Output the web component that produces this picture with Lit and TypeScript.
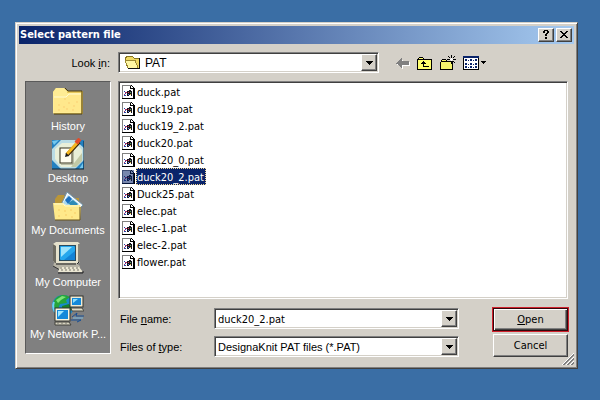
import { LitElement, html, svg, css } from "lit";
import { customElement, property, state } from "lit/decorators.js";
import { classMap } from "lit/directives/class-map.js";

const folderLarge = svg`
  <path d="M1 6 L4 2 H12 L15 5 H31 V28 H2 L1 27Z" fill="#e8c95c"/>
  <path d="M1 6 L4 2 H12 L15 5 V7 H29 V27 H1Z" fill="#ffec94"/>
  <path d="M2 11 L15 10 L17 8 H29 V26 H2Z" fill="#ffe88c"/>
  <path d="M2 11 H14 L17 8 H29" fill="none" stroke="#fffbd0"/>
  <path d="M13 2 L16 5 H30 V28 H2" fill="none" stroke="#4a3c10"/>
  <path d="M6 19h2m3 2h2m3-4h2m3 3h2m-17 4h2m6-1h2m4 1h2m2-8h2m-14-3h2" stroke="#fbcf74"/>`;

const desktopArt = svg`
  <rect x="0" y="2" width="32" height="29" fill="#16659e"/>
  <path d="M6 2H27L32 8V24L25 31H8L0 23V9Z" fill="#b9dbe4"/>
  <path d="M10 5H24L30 12V22L22 29H9L3 21V11Z" fill="#e9efd8"/>
  <path d="M19 29L30 15V23L24 29Z" fill="#c2c9a6"/>
  <path d="M0 2H9L0 11ZM23 2H32V10ZM0 22L9 31H0ZM32 22V31H23Z" fill="#2380c0"/>
  <path d="M0 3L7 2L2 7ZM27 31L31 25V30Z" fill="#72c7ee"/>
  <rect x="8" y="10" width="12" height="15" fill="#fffef0" stroke="#34301c"/>
  <path d="M9 26H21V11" fill="none" stroke="#8b8a72"/>
  <path d="M15 17L27 4" stroke="#3a2508" stroke-width="4"/>
  <path d="M15 16L26 4" stroke="#f6b81e" stroke-width="3"/>
  <path d="M24 5L28 1" stroke="#e34b28" stroke-width="4"/>
  <path d="M13 19L14 15L17 18Z" fill="#1c1c1c"/>
  <path d="M0 31H32V3" fill="none" stroke="#0b2538"/>`;

const documentsArt = svg`
  <path d="M3 9L6 5H12L14 8H27V29H3Z" fill="#bb9637"/>
  <path d="M9 15L15 2L31 15L23 23Z" fill="#f7fbff" stroke="#7395a8"/>
  <path d="M11 13L16 5L27 14L22 20Z" fill="#a9d8ee"/>
  <path d="M13 10L17 6L20 9L16 14Z" fill="#1c6fc0"/>
  <path d="M16 13L21 10L26 14L22 18Z" fill="#308bb5"/>
  <path d="M1 13H11L13 15H28L29 18L28 30H3Z" fill="#ffe98a"/>
  <path d="M2 14H11L13 16H27" fill="none" stroke="#fffac9"/>
  <path d="M3 30H28V17" fill="none" stroke="#65501a"/>
  <path d="M6 20h2m4 1h2m4-1h2m2 3h2m-18 3h2m5-1h2m4 2h2" stroke="#f7cb65"/>`;

const computerArt = svg`
  <path d="M1 2L4 0H26L28 2V20L24 23H5L1 19Z" fill="#e6e2cc"/>
  <path d="M1 2L4 4V22L1 19Z" fill="#6d6b61"/>
  <path d="M27 2V20L24 23H5" fill="none" stroke="#29292b"/>
  <rect x="7" y="3" width="17" height="16" fill="#2b4a5c"/>
  <rect x="8" y="4" width="15" height="14" rx="1" fill="#25a7ed"/>
  <path d="M9 5H20L9 15Z" fill="#9be3fc"/>
  <path d="M12 18L23 9V18Z" fill="#1283d5"/>
  <path d="M2 21H24L28 24V28H8L1 24Z" fill="#b7b4a6"/>
  <path d="M4 22H24" stroke="#1d1d1d"/>
  <path d="M1 24L8 28" stroke="#333"/>
  <path d="M8 25H27L31 30H6Z" fill="#eae6d2"/>
  <path d="M8 26h2m2 0h2m2 0h2m2 0h2m2 0h2M9 28h2m2 0h2m2 0h2m2 0h2m2 0h2" stroke="#77756b"/>
  <path d="M6 31H31V29" fill="none" stroke="#202020"/>`;

const networkArt = svg`
  <circle cx="11" cy="12" r="11" fill="#168acb"/>
  <path d="M2 7C5 1 12-1 18 3L14 6L15 9L8 10L6 15L1 14Z" fill="#25a43b"/>
  <path d="M4 6L10 2L14 3L9 6L6 9Z" fill="#7be477"/>
  <path d="M10 12L17 10L20 14L16 20H11Z" fill="#16802b"/>
  <path d="M2 8Q0 13 3 18" fill="none" stroke="#72d1f2" stroke-width="2"/>
  <rect x="18" y="2" width="13" height="11" fill="#efebd4" stroke="#33332d"/>
  <rect x="20" y="4" width="9" height="7" fill="#1489da"/>
  <path d="M21 5H26L21 9Z" fill="#8ddffc"/>
  <path d="M19 14H30L32 17H20Z" fill="#dedbc5" stroke="#4b4b44"/>
  <rect x="3" y="14" width="15" height="13" fill="#f7f4e0" stroke="#33332d"/>
  <rect x="5" y="16" width="11" height="9" fill="#1489da"/>
  <path d="M6 17H12L6 23Z" fill="#9ce6ff"/>
  <path d="M3 28H17L19 31H3Z" fill="#d8d4c2" stroke="#42423c"/>
  <path d="M5 29h2m2 0h2m2 0h2" stroke="#77756b"/>
  <path d="M20 23L25 19L24 22H32M19 26H29L25 28" fill="none" stroke="#174e94"/>
  <path d="M21 24H31" stroke="#78bde8"/>`;

const fileArt = svg`
  <path d="M2 1H11V2H12V3H13V4H14V15H2Z" fill="#fff"/>
  <path d="M2 1H11V2H3V15H2Z" fill="#808080"/>
  <path d="M11 1h1v1h1v1h1v1h1v11H2v-1h11V5h-3V2h1v2h2V3h-1V2h-1z" fill="#000"/>
  <path d="M7 7h2V6h2v1h1v5h-1v-1H9v1H7z" fill="#17121f"/>
  <path d="M4 7h1v1H4zm1 2h1v1H5zM4 11h2v1H4z" fill="#2446a8"/>
  <path d="M5 8h2v1H5zM4 10h1v1H4z" fill="#b22a60"/>
  <path d="M8 8h1v1H8z" fill="#d54848"/><path d="M10 8h1v1h-1z" fill="#55a95c"/>
  <path d="M8 10h1v1H8z" fill="#5582e5"/><path d="M10 10h1v1h-1z" fill="#e0c24b"/>`;

const folderSmall = svg`
  <path d="M1 4L4 2H8L10 4H15V14H4L1 7Z" fill="#efd963" stroke="#867420"/>
  <path d="M1 6H11L14 14H4Z" fill="#fff7a4" stroke="#9c8a32"/>
  <path d="M15 4H16V15H4V14H15Z" fill="#111"/>`;

const backArt = svg`
  <path d="M3 9H4V8H5V7H6V6H7V5H9V7H16V11H9V14H8V13H7V12H6V11H5V10H3Z" fill="#fff"/>
  <path d="M2 8H3V7H4V6H5V5H6V4H7V3H8V6H15V10H8V13H7V12H6V11H5V10H4V9H2Z" fill="#808080"/>`;

const upArt = svg`
  <path d="M0 4H1V3H2V2H6V3H7V4H15V15H0Z" fill="#000"/>
  <path d="M1 5H14V14H1Z" fill="#ffff6e"/><path d="M2 3H6V4H2Z" fill="#ffff6e"/>
  <path d="M4 8H5V7H6V6H7V7H8V8H9V9H7V11H12V12H6V9H4Z" fill="#000"/>`;

const newArt = svg`
  <path d="M0 7H1V5H2V4H6V5H7V6H13V15H0Z" fill="#000"/>
  <path d="M1 7H12V14H1Z" fill="#f2f26c"/><path d="M2 5H6V6H2Z" fill="#f2f26c"/>
  <path d="M11 0h1v3h-1zM11 6h1v3h-1zM7 4h3v1H7zM13 4h3v1h-3zM8 1h1v1H8zM9 2h1v1H9zM14 1h1v1h-1zM13 2h1v1h-1zM13 6h1v1h-1zM14 7h1v1h-1zM9 6h1v1H9z" fill="#000"/>
  <path d="M10 4h3v1h-3zM11 3h1v3h-1z" fill="#fff"/>`;

const viewArt = svg`
  <rect x="0" y="1" width="16" height="14" fill="#000"/>
  <rect x="0" y="1" width="16" height="2" fill="#0a246a"/>
  <rect x="1" y="3" width="14" height="11" fill="#fff"/>
  <path d="M2 4h2v2H2zM5 5h1v1H5zM7 4h2v2H7zM10 5h1v1h-1zM12 4h2v2h-2zM2 8h2v2H2zM5 9h1v1H5zM7 8h2v2H7zM10 9h1v1h-1zM12 8h2v2h-2zM2 11h2v2H2zM5 12h1v1H5zM7 11h2v2H7zM10 12h1v1h-1zM12 11h2v2h-2z" fill="#0a246a"/>`;

const icon = (art: unknown, size: "small" | "large" = "small") => html`
  <svg class=${size} viewBox=${size === "large" ? "0 0 32 32" : "0 0 16 16"} aria-hidden="true"
    shape-rendering=${size === "large" ? "auto" : "crispEdges"}>${art}</svg>`;

const places = [
  { name: "History", art: folderLarge },
  { name: "Desktop", art: desktopArt },
  { name: "My Documents", art: documentsArt },
  { name: "My Computer", art: computerArt },
  { name: "My Network P...", art: networkArt },
];

const files = [
  "duck.pat", "duck19.pat", "duck19_2.pat", "duck20.pat", "duck20_0.pat", "duck20_2.pat",
  "Duck25.pat", "elec.pat", "elec-1.pat", "elec-2.pat", "flower.pat",
];

const shared = css`
  * { box-sizing: border-box; }
  button, input, select { font: inherit; color: inherit; margin: 0; padding: 0; border-radius: 0; }
  svg { display: block; flex: none; }
  .small { width: 16px; height: 16px; }
  .large { width: 32px; height: 32px; }
`;

@customElement("places-bar")
export class PlacesBar extends LitElement {
  static styles = [shared, css`
    :host { display: block; }
    .bar {
      height: 100%; padding-top: 4px; background: #808080; color: #fff;
      border: 1px solid; border-color: #5a5a5a #fff #fff #5a5a5a;
    }
    .place {
      display: flex; flex-direction: column; align-items: center; width: 100%; height: 52px;
      border: 0; background: none; line-height: 16px; white-space: nowrap;
    }
  `];

  render() {
    return html`<nav class="bar" aria-label="Places">
      ${places.map((p) => html`<button class="place">${icon(p.art, "large")}<span>${p.name}</span></button>`)}
    </nav>`;
  }
}

@customElement("file-list")
export class FileList extends LitElement {
  @property() selected = "";

  static styles = [shared, css`
    :host { display: block; }
    .list {
      height: 100%; background: #fff; font-family: "DejaVu Sans Condensed", "DejaVu Sans", sans-serif;
      font-stretch: condensed; border: 1px solid; border-color: #808080 #fff #fff #808080;
      box-shadow: inset 1px 1px #404040, inset -1px -1px #d4d0c8; padding: 1px;
    }
    .file {
      display: flex; align-items: center; height: 17px; border: 0; background: none; line-height: 13px;
    }
    .name { border: 1px solid transparent; padding: 2px 1px 0 0; }
    .chosen .name { background: #0a246a; color: #fff; border: 1px dotted #f5db95; }
    .art { position: relative; }
    .chosen .art::after {
      content: ""; position: absolute; inset: 1px 2px 1px 2px; background: #0a246a; opacity: 0.55;
    }
  `];

  private pick(name: string) {
    this.dispatchEvent(new CustomEvent("pick", { detail: name }));
  }

  render() {
    return html`<div class="list" role="listbox" aria-label="Files">
      ${files.map((f) => html`
        <button role="option" aria-selected=${f === this.selected ? "true" : "false"}
          class=${classMap({ file: true, chosen: f === this.selected })} @click=${() => this.pick(f)}>
          <span class="art">${icon(fileArt)}</span><span class="name">${f}</span>
        </button>`)}
    </div>`;
  }
}

@customElement("app-root")
export class AppRoot extends LitElement {
  @state() private fileName = "duck20_2.pat";

  static styles = [shared, css`
    :host {
      display: block; min-height: 100vh; box-sizing: border-box; padding: 22px 22px 30px 15px;
      background: #3a6ea5; color: #000; font: 11px/16px "Liberation Sans", Arial, sans-serif;
    }
    .dialog {
      position: relative; background: #d4d0c8; padding: 3px;
      border: 1px solid; border-color: #d4d0c8 #404040 #404040 #d4d0c8;
      box-shadow: inset 1px 1px #fff, inset -1px -1px #808080;
    }
    .titlebar {
      display: flex; align-items: center; gap: 2px; height: 18px; padding-right: 2px;
      background: linear-gradient(to right, #0a246a, #a6caf0); color: #fff;
    }
    .title {
      flex: 1; margin: 0; padding-left: 1px;
      font: bold 11px/18px "DejaVu Sans Condensed", "DejaVu Sans", sans-serif; font-stretch: condensed;
    }
    .raised {
      display: flex; align-items: center; justify-content: center; background: #d4d0c8;
      border: 1px solid; border-color: #fff #404040 #404040 #fff; box-shadow: inset -1px -1px #808080;
      color: #000;
    }
    .caption { width: 16px; height: 14px; }
    .glyph { width: 14px; height: 12px; }
    .body { padding: 8px 6px; }
    .top { display: flex; align-items: center; margin-bottom: 8px; }
    .look { width: 86px; padding-right: 1px; text-align: right; }
    .combo {
      position: relative; display: flex; height: 21px; background: #fff; padding: 1px;
      border: 1px solid; border-color: #808080 #fff #fff #808080;
      box-shadow: inset 1px 1px #404040, inset -1px -1px #d4d0c8;
    }
    .folder { flex: 1; margin-left: 7px; }
    .field {
      flex: 1; min-width: 0; width: 100%; border: 0; background: transparent; appearance: none;
      padding: 0 18px 0 2px; outline: 0;
    }
    .folder .field { padding-left: 25px; font-size: 12px; }
    .wide {
      padding-top: 2px; font-family: "DejaVu Sans Condensed", "DejaVu Sans", sans-serif;
      font-stretch: condensed;
    }
    .folder .small { position: absolute; left: 5px; top: 1px; pointer-events: none; }
    .drop { position: absolute; top: 1px; right: 1px; bottom: 1px; width: 16px; pointer-events: none; }
    .caret { width: 7px; height: 4px; }
    .tools { display: flex; align-items: center; gap: 7px; width: 174px; margin-left: 15px; }
    .tool { display: flex; align-items: center; gap: 2px; border: 0; background: none; }
    .tool .caret { width: 5px; height: 3px; }
    .main { display: flex; gap: 7px; }
    .places { flex: none; width: 86px; margin-bottom: 3px; }
    .content { flex: 1; min-width: 0; }
    .files { height: 218px; margin-bottom: 9px; }
    .form { display: flex; gap: 34px; padding-left: 2px; }
    .fields {
      flex: 1; display: grid; grid-template-columns: 94px 1fr; row-gap: 7px; align-items: center;
    }
    .actions { display: flex; flex-direction: column; gap: 3px; width: 75px; }
    .action {
      height: 23px; font-family: "DejaVu Sans Condensed", "DejaVu Sans", sans-serif;
      font-stretch: condensed;
    }
    .default {
      outline: 1px solid #d0202c; border-color: #30080c;
      box-shadow: inset 1px 1px #fff, inset -1px -1px #404040, inset -2px -2px #808080;
    }
    .grip { position: absolute; right: 3px; bottom: 3px; width: 12px; height: 12px; }
  `];

  private caret() {
    return html`<svg class="caret" viewBox="0 0 7 4" shape-rendering="crispEdges" aria-hidden="true">
      <path d="M0 0H7V1H6V2H5V3H4V4H3V3H2V2H1V1H0Z" fill="#000" /></svg>`;
  }

  render() {
    return html`
      <section class="dialog" role="dialog" aria-labelledby="title">
        <header class="titlebar">
          <h1 class="title" id="title">Select pattern file</h1>
          <button class="raised caption" aria-label="Help">
            <svg class="glyph" viewBox="0 0 14 12" shape-rendering="crispEdges">
              <path d="M4 2h1V1h4v1h1v2H9v1H8v2H6V5h1V4h1V2H6v2H4zM6 8h2v2H6z" /></svg>
          </button>
          <button class="raised caption" aria-label="Close">
            <svg class="glyph" viewBox="0 0 14 12" shape-rendering="crispEdges">
              <path d="M3 2h2v1h1v1h2V3h1V2h2v1h-1v1H9v1H8v1h1v1h1v1h1v1H9V8H8V7H6v1H5v1H3V8h1V7h1V6h1V5H5V4H4V3H3z" /></svg>
          </button>
        </header>
        <div class="body">
          <div class="top">
            <label class="look" for="folder">Look <u>i</u>n:</label>
            <div class="combo folder">
              ${icon(folderSmall)}
              <select class="field" id="folder"><option>PAT</option></select>
              <span class="raised drop">${this.caret()}</span>
            </div>
            <div class="tools">
              <button class="tool" aria-label="Back">${icon(backArt)}</button>
              <button class="tool" aria-label="Up one level">${icon(upArt)}</button>
              <button class="tool" aria-label="New folder">${icon(newArt)}</button>
              <button class="tool" aria-label="View">${icon(viewArt)}${this.caret()}</button>
            </div>
          </div>
          <div class="main">
            <places-bar class="places"></places-bar>
            <div class="content">
              <file-list class="files" .selected=${this.fileName}
                @pick=${(e: CustomEvent<string>) => (this.fileName = e.detail)}></file-list>
              <div class="form">
                <div class="fields">
                  <label for="name">File <u>n</u>ame:</label>
                  <div class="combo">
                    <input class="field wide" id="name" type="text" .value=${this.fileName} />
                    <span class="raised drop">${this.caret()}</span>
                  </div>
                  <label for="type">Files of <u>t</u>ype:</label>
                  <div class="combo">
                    <select class="field" id="type"><option>DesignaKnit PAT files (*.PAT)</option></select>
                    <span class="raised drop">${this.caret()}</span>
                  </div>
                </div>
                <div class="actions">
                  <button class="raised action default"><span><u>O</u>pen</span></button>
                  <button class="raised action">Cancel</button>
                </div>
              </div>
            </div>
          </div>
        </div>
        <svg class="grip" viewBox="0 0 12 12" aria-hidden="true">
          <path d="M0 12L12 0M4 12L12 4M8 12L12 8" stroke="#fff" />
          <path d="M1 12L12 1M2 12L12 2M5 12L12 5M6 12L12 6M9 12L12 9M10 12L12 10" stroke="#808080" />
        </svg>
      </section>`;
  }
}
